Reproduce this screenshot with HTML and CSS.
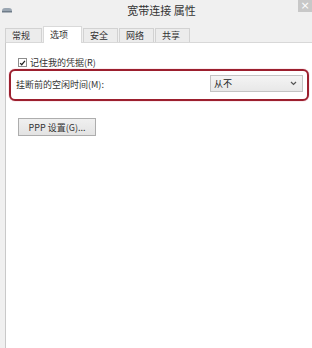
FILE: index.html
```html
<!DOCTYPE html>
<html lang="zh-CN">
<head>
  <meta charset="UTF-8">
  <title>宽带连接 属性</title>
  <link rel="stylesheet" href="styles.css">
</head>
<body>
  <div class="titlebar">
    <svg class="app-icon" width="12" height="8" viewBox="0 0 12 8">
      <path d="M1 5 Q1 2 4 2 L8 2 Q11 2 11 5 L11 6 L1 6 Z" fill="#9aa6b2"/>
      <rect x="1" y="5" width="10" height="1.5" fill="#6f7c89"/>
    </svg>
    <div class="title">宽带连接 属性</div>
    <div class="close">×</div>
  </div>

  <div class="tabs">
    <div class="tab first">常规</div>
    <div class="tab active">选项</div>
    <div class="tab">安全</div>
    <div class="tab">网络</div>
    <div class="tab">共享</div>
  </div>

  <div class="panel">
    <label class="check-row">
      <span class="checkbox">
        <svg width="8" height="8" viewBox="0 0 8 8"><path d="M1.3 4.2 L3.1 6 L6.8 1.6" fill="none" stroke="#222" stroke-width="1.4"/></svg>
      </span>
      记住我的凭据(R)
    </label>

    <div class="idle-row">
      <span class="idle-label">挂断前的空闲时间(M):</span>
      <div class="select">
        <span>从不</span>
        <svg width="7" height="5" viewBox="0 0 7 5"><path d="M1 1 L3.5 3.5 L6 1" fill="none" stroke="#555" stroke-width="1.2"/></svg>
      </div>
    </div>

    <button class="ppp-btn">PPP 设置(G)...</button>
  </div>
</body>
</html>
```

FILE: styles.css
```css
html, body {
  height: 100%;
}
body {
  margin: 0;
  background: #f0f0f0;
  font-family: "Noto Sans CJK SC", "Noto Sans", sans-serif;
  color: #222;
  display: flex;
  flex-direction: column;
  overflow: hidden;
}

/* 标题栏 */
.titlebar {
  height: 21px;
  display: flex;
  align-items: flex-start;
}
.app-icon {
  margin: 6px 0 0 1px;
}
.title {
  flex: 1;
  text-align: center;
  font-size: 11px;
  line-height: 20px;
  color: #333;
  padding-left: 12px;
}
.close {
  width: 14px;
  height: 12px;
  background: #c8c8c8;
  color: #fff;
  font-size: 11px;
  line-height: 11px;
  text-align: center;
  font-family: "DejaVu Sans", sans-serif;
}

/* 选项卡 */
.tabs {
  display: flex;
  align-items: flex-end;
  padding: 5px 0 0 5px;
  height: 16px;
  position: relative;
  z-index: 1;
}
.tab {
  height: 13px;
  line-height: 13px;
  font-size: 9px;
  padding: 0 6px;
  border: 1px solid #d2d2d2;
  border-bottom: none;
  background: #ececec;
  color: #333;
  width: 21px;
  margin-right: 1px;
}
.tab.first {
  width: 23px;
}
.tab.active {
  height: 16px;
  line-height: 15px;
  background: #fff;
  border-color: #d9d9d9;
  width: 25px;
  margin-bottom: -1px;
}

/* 内容面板 */
.panel {
  flex: 1;
  margin-left: 5px;
  background: #fff;
  border-left: 1px solid #c9c9c9;
  border-top: 1px solid #d8d8d8;
  padding: 14px 3px 0 3px;
  font-size: 9px;
  display: flex;
  flex-direction: column;
  align-items: flex-start;
}
.check-row {
  display: flex;
  align-items: center;
  gap: 3px;
  padding-left: 9px;
  height: 11px;
  color: #333;
}
.checkbox {
  width: 7px;
  height: 7px;
  border: 1px solid #8c8c8c;
  display: flex;
  align-items: center;
  justify-content: center;
  background: #fff;
}
.idle-row {
  align-self: stretch;
  margin-top: 1px;
  border: 2px solid #9c1f2e;
  border-radius: 6px;
  height: 24px;
  display: flex;
  align-items: center;
  justify-content: space-between;
  padding: 0 4px 4px 5px;
  box-shadow: 0 0 1px #c46;
}
.idle-label {
  color: #333;
  margin-top: 3px;
}
.select {
  border: 1px solid #c4c4c4;
  background: linear-gradient(#f4f4f4, #e8e8e8);
  display: flex;
  align-items: center;
  justify-content: space-between;
  padding: 0 5px 0 3px;
  box-sizing: border-box;
  width: 93px;
  height: 17px;
}
.ppp-btn {
  margin: 17px 0 0 9px;
  width: 78px;
  height: 18px;
  border: 1px solid #adadad;
  background: linear-gradient(#f0f0f0, #e3e3e3);
  font-family: "Noto Sans CJK SC", "Noto Sans", sans-serif;
  font-size: 9px;
  color: #333;
  padding: 0;
}
```
